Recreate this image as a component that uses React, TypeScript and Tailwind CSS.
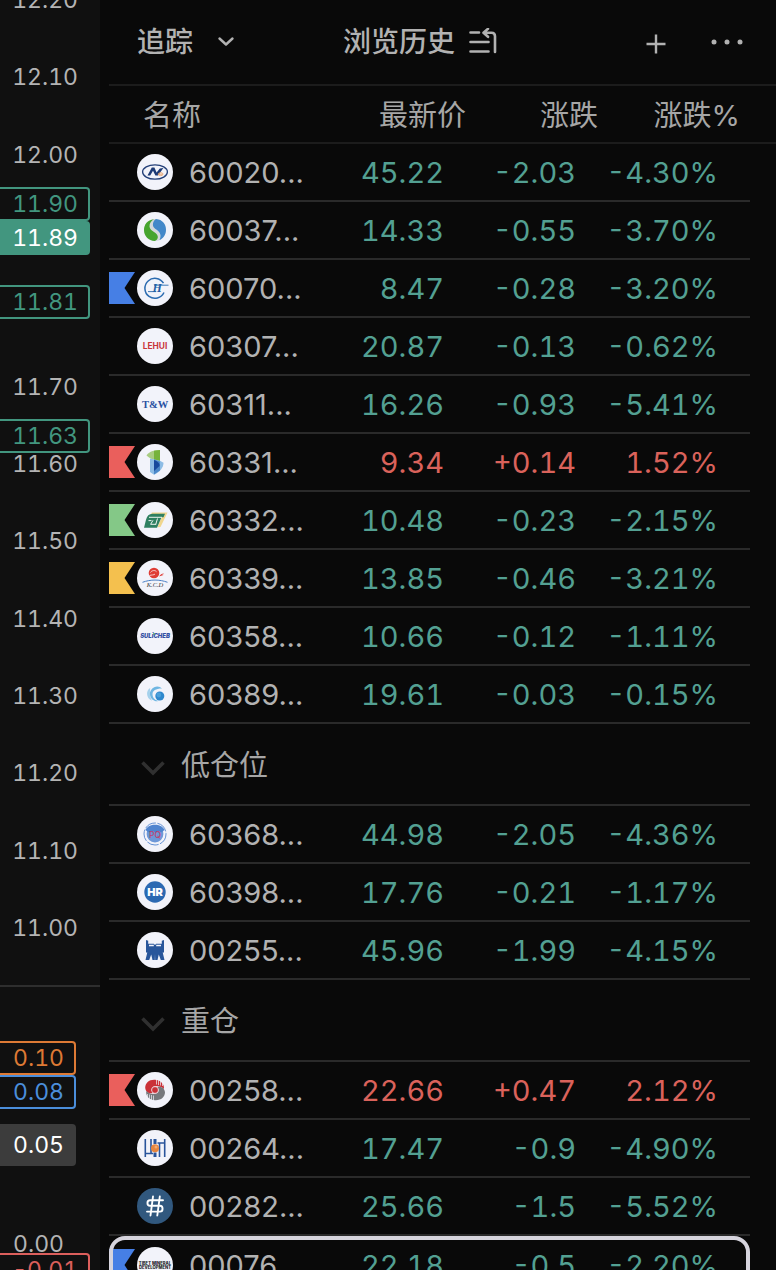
import type { ReactNode } from "react";

type Flag = "blue" | "red" | "green" | "yellow";

type Stock = {
  name: string;
  price: string;
  change: string;
  percent: string;
  up?: boolean;
  flag?: Flag;
  selected?: boolean;
  logo: ReactNode;
};

type Group = { title?: string; stocks: Stock[] };

const flagFill: Record<Flag, string> = {
  blue: "fill-[#467fe5]",
  red: "fill-[#ea5f5c]",
  green: "fill-[#84c887]",
  yellow: "fill-[#f4c04e]",
};

function Disc({ children, fill = "#f2f3fa" }: { children: ReactNode; fill?: string }) {
  return (
    <svg viewBox="0 0 36 36" className="size-9 shrink-0" aria-hidden="true">
      <circle cx="18" cy="18" r="18" fill={fill} />
      {children}
    </svg>
  );
}

const logos = {
  n: (
    <Disc>
      <ellipse cx="18" cy="18" rx="12.4" ry="7.2" fill="none" stroke="#233f78" strokeWidth="1.3" />
      <path d="M10.5 21.5 14.8 13.6h2.6l2.2 5 3.2-4.2 3.6-.4-5.4 7.6h-2.6l-2.4-4.8-2.8 4.7z" fill="#1d3a75" />
      <path d="M21 20.2c1-2 4.400-2 5.200 0-1 1.900-4.200 1.900-5.200 0zM21.500 20.200h4.300" fill="none" stroke="#e9a36b" strokeWidth=".9" />
    </Disc>
  ),
  s: (
    <Disc>
      <circle cx="18" cy="18" r="11" fill="#d3d8dc" />
      <path d="M17 7.200C10.500 7.800 7 12.500 7 18c0 6 4.500 10.800 11 11 3-1.500 3.800-4.500 1.500-7-2.500-2.500-6.500-3.500-7-7.500-.2-3.500 1.800-5.800 4.500-7.300z" fill="#46a52f" />
      <path d="M19 7.100C25.500 7.600 29 12.300 29 17.800c0 5-2.900 8.900-6.500 10.300 1.700-3.200 1.500-6.400-1.300-9-2.400-2.300-5.300-3-5.300-6.300 0-2.500 1-4.400 3.100-5.700z" fill="#4388c9" />
    </Disc>
  ),
  h: (
    <Disc>
      <path d="M26.500 13.200A10 10 0 1 0 27 22.500" fill="none" stroke="#2b6bb0" strokeWidth="1.500" />
      <path d="M11 21.600h8M17 15.200h14.500" stroke="#2b6bb0" strokeWidth=".9" />
      <text x="15.500" y="22.200" fontFamily="Liberation Serif, serif" fontSize="12" fontWeight="700" fontStyle="italic" fill="#245fa5">H</text>
    </Disc>
  ),
  lehui: (
    <Disc>
      <text x="18" y="20.500" textAnchor="middle" fontFamily="Inter, sans-serif" fontSize="8.400" fontWeight="700" fill="#c9353a">LEHUI</text>
    </Disc>
  ),
  tw: (
    <Disc>
      <text x="18" y="21.600" textAnchor="middle" fontFamily="Liberation Serif, serif" fontSize="10.500" fontWeight="700" fill="#2950a2">T&amp;W</text>
    </Disc>
  ),
  b: (
    <Disc>
      <path d="M9.500 11.500C12 7.500 17 6 23 6v9.500h-6.500c-2-.2-4.500-2-7-4z" fill="#a9cd83" />
      <path d="M17 6.700 23 6v13l-6-3z" fill="#76b33c" />
      <path d="M13 14.500l10 2.200 3.500 2c0 5-4 9.500-9.500 12L13 28z" fill="#8dbce5" />
      <path d="M17 15.500l6 2v9l-6 4z" fill="#4b87c8" />
      <path d="M17 16c3.500 1.200 6 3.500 5.500 6L17 27z" fill="#17499d" />
    </Disc>
  ),
  g: (
    <Disc>
      <path d="M15 10.500h15.500l-2 4.200L23.500 25l-3 .2 4.500-11H12.500z" fill="#f0d68e" />
      <path d="M7 25.800l2-8c1-4 3-6 6.500-6H28l-1.500 3.500h-2L20 25.800z" fill="#2f8061" />
      <path d="M12 15.300h13M14.500 18.600h-3M16 18.300l-2.400 4h5.600M20.500 16.500l-1.800 6" fill="none" stroke="#eef4f1" strokeWidth="1" />
    </Disc>
  ),
  kcd: (
    <Disc>
      <circle cx="17" cy="13" r="5.300" fill="#df3c35" />
      <path d="M13.500 12.500c1-2 4.500-2.800 6-.8M12.500 15.500c2-.8 4.500-.2 5.500-1.500" fill="none" stroke="#f7d9db" strokeWidth=".9" />
      <path d="M22 16.500c1.500-2 2.500-2.800 5-3.300l-2 1.800 2.200-.2z" fill="#df3c35" />
      <path d="M5.500 22.300c8-3 17-3 25 0" fill="none" stroke="#4c80c4" strokeWidth="1" />
      <text x="18" y="27.400" textAnchor="middle" fontFamily="Liberation Serif, serif" fontSize="6.500" fontStyle="italic" fill="#33343a">K.C.D</text>
    </Disc>
  ),
  suli: (
    <Disc>
      <text x="18" y="20.200" textAnchor="middle" fontFamily="Inter, sans-serif" fontSize="5.900" fontWeight="900" fontStyle="italic" fill="#3450a3">SULiCHEB</text>
      <circle cx="17" cy="15.800" r=".9" fill="#4ea65b" />
    </Disc>
  ),
  c: (
    <Disc>
      <path d="M25 12.500A7.300 7.300 0 1 0 22.500 24.800c-4 .2-7-2.800-7-6.500 0-3.600 3-5.800 9.500-5.800z" fill="#6fb6e2" />
      <path d="M13.200 12C9 14 8.500 22 15 24.800c-2-3.500-2.500-8.300-1.800-12.800z" fill="#a5d1ec" />
      <circle cx="22.800" cy="20" r="4.500" fill="#2f88cd" />
      <circle cx="21.800" cy="19" r="2.400" fill="#4a9fda" />
    </Disc>
  ),
  pq: (
    <Disc>
      <circle cx="18" cy="18" r="11" fill="none" stroke="#6290d4" strokeWidth="1" strokeDasharray="12 1.500" />
      <circle cx="18" cy="18" r="8.400" fill="#6d98d8" />
      <path d="M8.500 14c3-7 16-7 19 0l-3 2.300h-13z" fill="#4f84cf" />
      <text x="18" y="21.800" textAnchor="middle" fontFamily="Inter, sans-serif" fontSize="8.500" fontWeight="500" fill="#bc4570">PQ</text>
    </Disc>
  ),
  hr: (
    <Disc>
      <circle cx="18" cy="18" r="10.700" fill="#2b69b2" />
      <text x="18" y="22" textAnchor="middle" fontFamily="Inter, sans-serif" fontSize="11" fontWeight="900" fill="#fff">HR</text>
    </Disc>
  ),
  bull: (
    <Disc>
      <path d="M9 8l2.200.8v3h5.600l1.200 1.200 1.200-1.200h5.600v-3L27 8v12.500h-1.300L27.500 28h-3.700l-2-5.500-1.300 5.500h-2.300L18 22l-.2 6h-2.300l-1.300-5.500-2 5.500H8.500l1.800-7.500H9z" fill="#28569b" />
      <path d="M12 12.800h4.800v1.500H12zM19.200 12.800H24v1.500h-4.800z" fill="#f2f3fa" />
    </Disc>
  ),
  swirl: (
    <Disc>
      <path d="M18 7.800C12 7.400 8.400 11 8.200 15.500c.2 4.400 3.900 6.800 7.900 5.500-2.800-2.400-1.700-6.500 2-6.900 3-.2 6 .4 8.900 3C27.500 11.500 23 8 18 7.800z" fill="#ca3138" />
      <path d="M18 28.200c6 .4 9.800-3.200 10-7.700-.2-4.400-3.900-6.800-7.900-5.500 2.800 2.400 1.700 6.500-2 6.900-3 .2-6-.4-8.900-3C8.500 24.500 13 28 18 28.200z" fill="#77797d" />
      <path d="M19.500 7v5.500M21.500 7v6M23.500 8v5.500M25.500 10v4M16.500 29v-5.500M14.500 29v-6M12.500 28v-5.500M10.500 26v-4" stroke="#f2f3fa" strokeWidth=".7" />
      <circle cx="18" cy="18" r="3.400" fill="#ca3138" stroke="#f2f3fa" strokeWidth=".7" />
    </Disc>
  ),
  lh: (
    <Disc>
      <path d="M8.300 9v18M8 23.500h8M14 9v14M20.500 13h7M27.700 9v18M22.500 13v14" fill="none" stroke="#29549b" strokeWidth="1.600" />
      <path d="M18 9v5M18 22.500V27" stroke="#29549b" strokeWidth="3" />
      <circle cx="18" cy="18.200" r="4" fill="#e6853e" />
      <circle cx="19" cy="17" r="1.500" fill="#f3aa71" />
    </Disc>
  ),
  hash: (
    <Disc fill="#31587e">
      <path d="M16 8.500 13.500 27.500M22.800 8.500 20.300 27.500M26 12.200H13c-3.400 0-3.400 5.600 0 5.600h10c3.400 0 3.400 5.800 0 5.800H10" fill="none" stroke="#fff" strokeWidth="1.900" strokeLinecap="round" />
    </Disc>
  ),
  tibet: (
    <Disc>
      <text x="18" y="17.800" textAnchor="middle" fontFamily="Inter, sans-serif" fontSize="4.200" fontWeight="800" fill="#232326">TIBET MINERAL</text>
      <text x="18" y="22.300" textAnchor="middle" fontFamily="Inter, sans-serif" fontSize="4.200" fontWeight="800" fill="#232326">DEVELOPMENT</text>
    </Disc>
  ),
};

const groups: Group[] = [
  {
    stocks: [
      { name: "60020...", price: "45.22", change: "-2.03", percent: "-4.30%", logo: logos.n },
      { name: "60037...", price: "14.33", change: "-0.55", percent: "-3.70%", logo: logos.s },
      { name: "60070...", price: "8.47", change: "-0.28", percent: "-3.20%", flag: "blue", logo: logos.h },
      { name: "60307...", price: "20.87", change: "-0.13", percent: "-0.62%", logo: logos.lehui },
      { name: "60311...", price: "16.26", change: "-0.93", percent: "-5.41%", logo: logos.tw },
      { name: "60331...", price: "9.34", change: "+0.14", percent: "1.52%", up: true, flag: "red", logo: logos.b },
      { name: "60332...", price: "10.48", change: "-0.23", percent: "-2.15%", flag: "green", logo: logos.g },
      { name: "60339...", price: "13.85", change: "-0.46", percent: "-3.21%", flag: "yellow", logo: logos.kcd },
      { name: "60358...", price: "10.66", change: "-0.12", percent: "-1.11%", logo: logos.suli },
      { name: "60389...", price: "19.61", change: "-0.03", percent: "-0.15%", logo: logos.c },
    ],
  },
  {
    title: "低仓位",
    stocks: [
      { name: "60368...", price: "44.98", change: "-2.05", percent: "-4.36%", logo: logos.pq },
      { name: "60398...", price: "17.76", change: "-0.21", percent: "-1.17%", logo: logos.hr },
      { name: "00255...", price: "45.96", change: "-1.99", percent: "-4.15%", logo: logos.bull },
    ],
  },
  {
    title: "重仓",
    stocks: [
      { name: "00258...", price: "22.66", change: "+0.47", percent: "2.12%", up: true, flag: "red", logo: logos.swirl },
      { name: "00264...", price: "17.47", change: "-0.9", percent: "-4.90%", logo: logos.lh },
      { name: "00282...", price: "25.66", change: "-1.5", percent: "-5.52%", logo: logos.hash },
      { name: "00076...", price: "22.18", change: "-0.5", percent: "-2.20%", flag: "blue", selected: true, logo: logos.tibet },
    ],
  },
];

// Empty entries are ticks that a price tag covers.
const ticks = ["12.20", "12.10", "12.00", "", "", "11.70", "11.60", "11.50", "11.40", "11.30", "11.20", "11.10", "11.00"];

function PriceAxis() {
  const tag = "absolute left-0 flex h-[34px] w-[90px] items-center justify-end rounded-r-sm border-2 border-l-0 pr-2.5";
  const smallTag = "absolute left-0 flex w-[76px] items-center justify-end rounded-r-sm";
  return (
    <aside className="flex w-[100px] shrink-0 flex-col overflow-hidden bg-[#101010] text-[23px] leading-6 text-[#b4b4b4] tabular-nums">
      <div className="relative h-[987px] shrink-0 border-b-2 border-[#2e2e2e]">
        <div className="-mt-3 flex h-[952px] flex-col justify-between">
          {ticks.map((t, i) => (
            <span key={i} className="h-6 pr-[22px] text-right">{t}</span>
          ))}
        </div>
        <span className={`${tag} top-[187px] border-[#42967f] bg-[#101010] text-[#42967f]`}>11.90</span>
        <span className={`${tag} top-[221px] border-[#42967f] bg-[#42967f] text-white`}>11.89</span>
        <span className={`${tag} top-[285px] border-[#42967f] bg-[#101010] text-[#42967f]`}>11.81</span>
        <span className={`${tag} top-[419px] border-[#42967f] text-[#42967f]`}>11.63</span>
      </div>
      <div className="relative flex-1">
        <span className={`${smallTag} top-[54px] h-[34px] border-2 border-l-0 border-[#dd7a35] pr-2.5 text-[#dd7a35]`}>0.10</span>
        <span className={`${smallTag} top-[88px] h-[34px] border-2 border-l-0 border-[#4b8edb] pr-2.5 text-[#4b8edb]`}>0.08</span>
        <span className={`${smallTag} top-[137px] h-[42px] bg-[#3c3c3c] pr-3 text-white`}>0.05</span>
        <span className={`${smallTag} top-[245px] h-6 pr-3`}>0.00</span>
        <span className={`${tag} top-[266px] border-[#dc5f5c] text-[#dc5f5c]`}>-0.01</span>
      </div>
    </aside>
  );
}

function StockRow({ stock }: { stock: Stock }) {
  const line = stock.selected ? "" : "border-b-2 border-[#2a2a2a]";
  const tone = stock.up ? "text-[#da625b]" : "text-[#53a092]";
  return (
    <tr className="relative h-[58px]">
      <td className={`p-0 ${line}`}>
        <div className="flex items-center">
          <span className="w-7 shrink-0">
            {stock.flag && (
              <svg viewBox="0 0 26 32" className={`h-8 w-[26px] ${flagFill[stock.flag]}`} aria-hidden="true">
                <path d="M0 0h26L15.500 16 26 32H0z" />
              </svg>
            )}
          </span>
          {stock.logo}
          <span className="ml-4 pt-0.5 text-[#b2b2b2]">{stock.name}</span>
        </div>
        {stock.selected && (
          <span className="pointer-events-none absolute inset-y-0 right-[26px] left-0 rounded-2xl border-4 border-[#d6d4dd]" />
        )}
      </td>
      <td className={`p-0 pt-0.5 pr-[22px] text-right tabular-nums ${line} ${tone}`}>{stock.price}</td>
      <td className={`p-0 pt-0.5 pr-[22px] text-right tabular-nums ${line} ${tone}`}>{stock.change}</td>
      <td className={`p-0 pt-0.5 pr-8 text-right tabular-nums ${line} ${tone}`}>{stock.percent}</td>
      <td className="p-0" />
    </tr>
  );
}

export default function App() {
  const headLine = "border-b-2 border-[#1c1c1c] p-0 pt-1 font-normal";
  return (
    <div className="flex h-screen overflow-hidden bg-[#090909] font-[Inter,'Noto_Sans_CJK_SC',sans-serif] font-normal">
      <PriceAxis />
      <main className="ml-[9px] min-w-0 flex-1">
        <header className="flex h-[86px] items-center border-b-2 border-[#1c1c1c] pr-8 pl-7 text-[28px] leading-10 font-medium text-[#b2b2b2]">
          <button className="flex items-center gap-6">
            追踪
            <svg viewBox="0 0 18 12" className="h-3 w-[18px]" fill="none" stroke="currentColor" strokeWidth="2.400" strokeLinecap="round" strokeLinejoin="round" aria-hidden="true">
              <path d="M2.500 2.500 9 8.500l6.500-6" />
            </svg>
          </button>
          <button className="ml-[108px] flex items-center gap-3.5">
            浏览历史
            <svg viewBox="0 0 28 28" className="size-7" fill="none" stroke="currentColor" strokeWidth="2.600" strokeLinecap="round" strokeLinejoin="round" aria-hidden="true">
              <path d="M1.500 4.500h8.500M1.500 14h18M1.500 23.500h18M19 .8 14.500 4.800l4.500 4M15 4.800h7.500c2 0 3.500 1.200 3.500 3.500V24" />
            </svg>
          </button>
          <button aria-label="添加" className="mt-1 ml-auto">
            <svg viewBox="0 0 20 20" className="size-5" fill="none" stroke="currentColor" strokeWidth="2.400" aria-hidden="true">
              <path d="M.500 10h19M10 .500v19" />
            </svg>
          </button>
          <button aria-label="更多" className="ml-11">
            <svg viewBox="0 0 34 6" className="h-1.5 w-[34px]" fill="currentColor" aria-hidden="true">
              <circle cx="4" cy="3" r="2.500" />
              <circle cx="17" cy="3" r="2.500" />
              <circle cx="30" cy="3" r="2.500" />
            </svg>
          </button>
        </header>
        <table className="w-full table-fixed border-separate border-spacing-0 text-[29px] leading-9">
          <colgroup>
            <col />
            <col className="w-[146px]" />
            <col className="w-[132px]" />
            <col className="w-[152px]" />
            <col className="w-[26px]" />
          </colgroup>
          <thead>
            <tr className="h-[58px] text-right text-[#a6a6a6]">
              <th className={`${headLine} pl-[34px] text-left`}>名称</th>
              <th className={headLine}>最新价</th>
              <th className={headLine}>涨跌</th>
              <th className={`${headLine} pr-2.5`}>涨跌%</th>
              <td className={headLine} />
            </tr>
          </thead>
          {groups.map((group, i) => (
            <tbody key={i}>
              {group.title && (
                <tr className="h-[82px]">
                  <td colSpan={4} className="border-b-2 border-[#2a2a2a] p-0 pt-1">
                    <button className="flex w-full items-center gap-4 pl-8 text-left text-[#a6a6a6]">
                      <svg viewBox="0 0 24 16" className="mt-1 h-4 w-6" fill="none" stroke="#303030" strokeWidth="3.500" aria-hidden="true">
                        <path d="M1.500 2.500 12 13 22.500 2.500" />
                      </svg>
                      {group.title}
                    </button>
                  </td>
                  <td className="p-0" />
                </tr>
              )}
              {group.stocks.map((stock) => (
                <StockRow key={stock.name} stock={stock} />
              ))}
            </tbody>
          ))}
        </table>
      </main>
    </div>
  );
}
